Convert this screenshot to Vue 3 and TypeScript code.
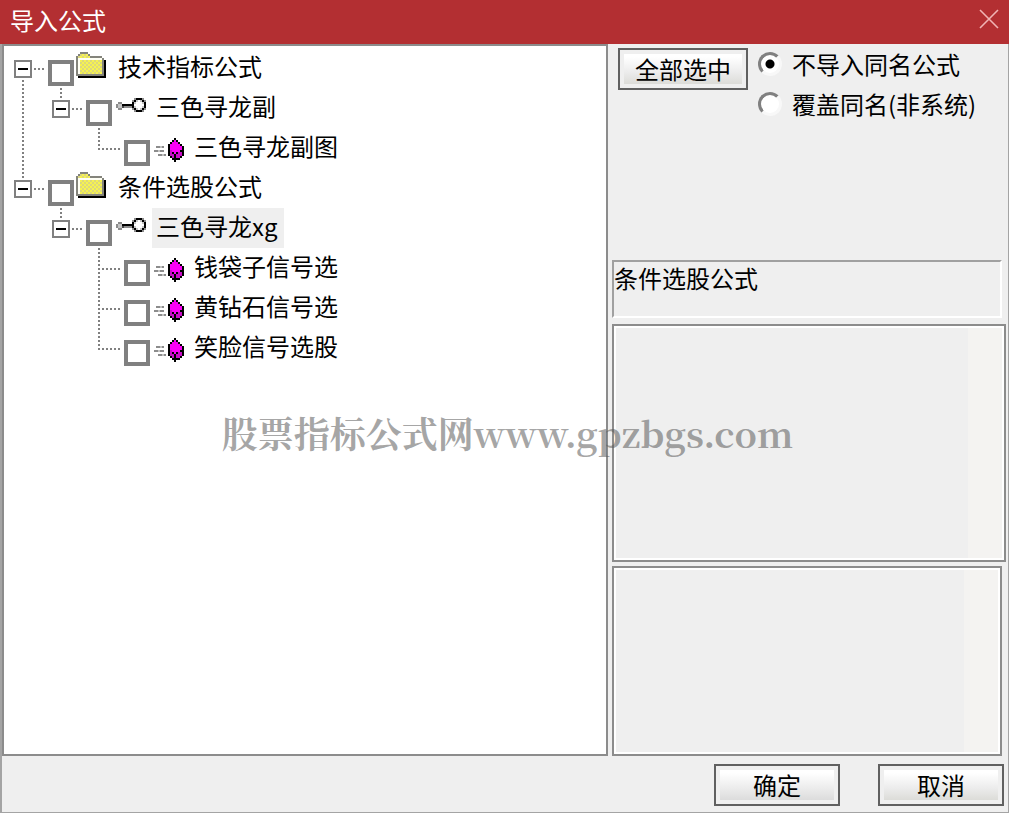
<script setup lang="ts">
import { computed, ref } from 'vue'

type Kind = 'folder' | 'key' | 'gem'

interface TreeNode {
  id: string
  label: string
  kind: Kind
  children?: TreeNode[]
}

interface Row {
  node: TreeNode
  guides: boolean[]
  top: boolean
  bottom: boolean
}

const nodes: TreeNode[] = [
  {
    id: 'tech',
    label: '技术指标公式',
    kind: 'folder',
    children: [
      {
        id: 'tech-sub',
        label: '三色寻龙副',
        kind: 'key',
        children: [{ id: 'tech-chart', label: '三色寻龙副图', kind: 'gem' }],
      },
    ],
  },
  {
    id: 'pick',
    label: '条件选股公式',
    kind: 'folder',
    children: [
      {
        id: 'pick-xg',
        label: '三色寻龙xg',
        kind: 'key',
        children: [
          { id: 'pick-bag', label: '钱袋子信号选', kind: 'gem' },
          { id: 'pick-diamond', label: '黄钻石信号选', kind: 'gem' },
          { id: 'pick-smile', label: '笑脸信号选股', kind: 'gem' },
        ],
      },
    ],
  },
]

const collapsed = ref<string[]>([])
const checked = ref<string[]>([])
const selected = ref('pick-xg')
const mode = ref('skip')

function flatten(list: TreeNode[], guides: boolean[], root: boolean): Row[] {
  return list.flatMap((node, i) => {
    const more = i < list.length - 1
    const row: Row = { node, guides, top: !root || i > 0, bottom: more }
    const open = node.children && !collapsed.value.includes(node.id)
    return open ? [row, ...flatten(node.children!, [...guides, more], false)] : [row]
  })
}

const rows = computed(() => flatten(nodes, [], true))

function toggle(id: string) {
  collapsed.value = collapsed.value.includes(id)
    ? collapsed.value.filter((x) => x !== id)
    : [...collapsed.value, id]
}

function allIds(list: TreeNode[]): string[] {
  return list.flatMap((n) => [n.id, ...allIds(n.children ?? [])])
}

function selectAll() {
  checked.value = allIds(nodes)
}

const palette: Record<string, string> = {
  K: '#000000',
  G: '#84847c',
  W: '#fffff4',
  Y: '#f6f250',
  y: '#dcd87c',
  M: '#fb00f6',
  D: '#c80cc6',
  g: '#8c8c8c',
  l: '#c4c4c4',
  d: '#444444',
}

const bitmaps: Record<Kind, string[]> = {
  folder: [
    '..GGGG.........',
    '.GyYyYG........',
    'GyYyYyYGGGGGG..',
    'GWWWWWWWWWWWWG.',
    'GWYyYyYyYyYyYGK',
    'GWyYyYyYyYyYyGK',
    'GWYyYyYyYyYyYGK',
    'GWyYyYyYyYyYyGK',
    'GWYyYyYyYyYyYGK',
    'GWyYyYyYyYyYyGK',
    'GWYyYyYyYyYyYGK',
    'GGGGGGGGGGGGGGK',
    '.KKKKKKKKKKKKKK',
  ],
  key: [
    '',
    '',
    '',
    '..........gKKKg.',
    '.........gKl.lKg',
    '..gg.....Kl...lK',
    '.gllKKKKKK.....K',
    '.glldggggKl...lK',
    '..gg.....gKl.lKg',
    '..........gKKKg.',
  ],
  gem: [
    '',
    '',
    '',
    '...........K....',
    '..........KMK...',
    '.........KMMMK..',
    '........KMMMMMK.',
    '..gglg..KMMMMMMK',
    '........KMMMMMMK',
    '.gglgg..KDMMMMKK',
    '........KDKMKDDK',
    '...gglg.KDDKDDDK',
    '.........KDKDDK.',
    '..........KKKK..',
    '...........K....',
  ],
}

function cells(kind: Kind) {
  return bitmaps[kind].flatMap((line, y) =>
    [...line].flatMap((c, x) => (c === '.' ? [] : [{ x, y, fill: palette[c] }])),
  )
}
</script>

<template>
  <div class="window">
    <header class="titlebar">
      <h1>导入公式</h1>
      <button type="button" class="close" aria-label="关闭">
        <svg width="20" height="20" viewBox="0 0 20 20">
          <path d="M1 1L19 19M19 1L1 19" stroke="#f0b4b4" stroke-width="1.6" />
        </svg>
      </button>
    </header>

    <main class="frame">
      <div class="body">
        <ul class="tree" role="tree" aria-label="公式">
          <li v-for="row in rows" :key="row.node.id" class="row" role="treeitem">
            <span v-for="(line, i) in row.guides" :key="i" class="guide">
              <svg v-if="line" width="38" height="40" class="rail">
                <path d="M9 0V40" />
              </svg>
            </span>
            <span class="stub">
              <svg width="34" height="40" class="rail">
                <path v-if="row.top" :d="row.node.children ? 'M9 0V12' : 'M9 0V22'" />
                <path v-if="row.bottom" :d="row.node.children ? 'M9 32V40' : 'M9 20V40'" />
                <path :d="row.node.children ? 'M20 21H30' : 'M12 21H30'" />
              </svg>
              <button
                v-if="row.node.children"
                type="button"
                class="toggle"
                :class="{ shut: collapsed.includes(row.node.id) }"
                :aria-label="'展开 ' + row.node.label"
                @click="toggle(row.node.id)"
              ></button>
            </span>
            <input
              :id="row.node.id"
              v-model="checked"
              class="check"
              type="checkbox"
              :value="row.node.id"
              :aria-label="row.node.label"
            />
            <svg class="icon" width="32" height="30" viewBox="0 0 16 15" shape-rendering="crispEdges">
              <rect
                v-for="c in cells(row.node.kind)"
                :key="c.x + '-' + c.y"
                :x="c.x"
                :y="c.y"
                width="1"
                height="1"
                :fill="c.fill"
              />
            </svg>
            <button
              type="button"
              class="label"
              :class="{ selected: selected === row.node.id }"
              @click="selected = row.node.id"
            >{{ row.node.label }}</button>
          </li>
        </ul>

        <section class="side">
          <div class="options">
            <button type="button" class="btn" @click="selectAll">全部选中</button>
            <div class="radios" role="radiogroup" aria-label="同名公式">
              <label><input v-model="mode" type="radio" name="mode" value="skip" />不导入同名公式</label>
              <label><input v-model="mode" type="radio" name="mode" value="cover" />覆盖同名(非系统)</label>
            </div>
          </div>
          <p class="status">条件选股公式</p>
          <textarea class="memo first" readonly aria-label="公式说明"></textarea>
          <textarea class="memo second" readonly aria-label="公式内容"></textarea>
        </section>
      </div>

      <footer class="actions">
        <button type="button" class="btn plain">确定</button>
        <button type="button" class="btn">取消</button>
      </footer>
    </main>

    <div class="watermark">股票指标公式网www.gpzbgs.com</div>
  </div>
</template>

<style>
body {
  margin: 0;
}
</style>

<style scoped>
.window,
.window * {
  box-sizing: border-box;
}

.window {
  position: relative;
  display: flex;
  flex-direction: column;
  min-height: 100vh;
  background: #efefef;
  color: #000;
  font-family: 'Noto Sans CJK SC', 'Liberation Sans', sans-serif;
  font-size: 24px;
  line-height: 40px;
}

button {
  font: inherit;
  color: inherit;
  cursor: default;
}

.titlebar {
  display: flex;
  align-items: flex-start;
  justify-content: space-between;
  height: 44px;
  padding: 0 10px;
  background: #b32f32;
  color: #fff;
}

h1 {
  margin: 0;
  font-size: 24px;
  font-weight: 400;
  line-height: 40px;
}

.close {
  display: flex;
  margin-top: 9px;
  padding: 0;
  border: 0;
  background: none;
}

.frame {
  flex: 1;
  display: flex;
  flex-direction: column;
  border: solid #a4a4a4;
  border-width: 0 1px 1px 2px;
}

.body {
  flex: 1;
  display: grid;
  grid-template-columns: minmax(0, 1fr) 400px;
}

.tree {
  margin: 0;
  padding: 2px 0 0 10px;
  border: 2px solid #8c8c8c;
  background: #fff;
  list-style: none;
}

.row {
  display: flex;
  align-items: flex-start;
  height: 40px;
}

.guide {
  flex: none;
  width: 38px;
  height: 40px;
}

.stub {
  flex: none;
  display: grid;
  width: 34px;
  height: 40px;
}

.stub > * {
  grid-area: 1 / 1;
}

.rail {
  display: block;
  fill: none;
  stroke: #808080;
  stroke-width: 2px;
  stroke-dasharray: 2 2;
}

.toggle {
  width: 18px;
  height: 18px;
  margin-top: 12px;
  padding: 0;
  border: 2px solid #808080;
  background: linear-gradient(#000, #000) center / 10px 2px no-repeat #fff;
}

.toggle.shut {
  background:
    linear-gradient(#000, #000) center / 10px 2px no-repeat,
    linear-gradient(#000, #000) center / 2px 10px no-repeat #fff;
}

.check {
  flex: none;
  appearance: none;
  width: 26px;
  height: 26px;
  margin: 12px 2px 0 0;
  border: 4px solid #808080;
  background: #fff;
}

.check:checked {
  background: linear-gradient(#000, #000) center / 10px 10px no-repeat #fff;
}

.icon {
  flex: none;
  margin: 4px 6px 0 0;
}

.label {
  height: 40px;
  padding: 0 6px 4px 4px;
  border: 0;
  background: none;
  line-height: 36px;
  white-space: nowrap;
}

.label.selected {
  background: #efefef;
}

.side {
  display: flex;
  flex-direction: column;
  padding-left: 4px;
}

.options {
  display: flex;
  align-items: flex-start;
  min-height: 216px;
  padding-left: 6px;
}

.options .btn {
  width: 130px;
  margin: 4px 10px 0 0;
}

.btn {
  width: 126px;
  height: 42px;
  padding: 4px;
  border: 2px solid #606060;
  background: linear-gradient(#fff 10%, #ececec 60%, #dcdcd8) content-box #efefec;
  line-height: 28px;
  white-space: nowrap;
}

.btn.plain {
  background: linear-gradient(#fff 10%, #ececec 60%, #dcdcdc) content-box #f0f0f0;
}

.radios {
  display: flex;
  flex-direction: column;
  white-space: nowrap;
}

.radios label {
  display: flex;
  align-items: center;
  height: 40px;
}

.radios input {
  appearance: none;
  width: 24px;
  height: 24px;
  margin: 0 10px 0 0;
  border: 3px solid;
  border-color: #808080 #f8f8f8 #f8f8f8 #808080;
  border-radius: 50%;
  background: #fff;
}

.radios input:checked {
  background: radial-gradient(circle, #000 4px, #fff 5px);
}

.status {
  height: 58px;
  margin: 0 6px 6px 0;
  border: 2px solid;
  border-color: #a0a0a0 #fff #fff #a0a0a0;
  line-height: 32px;
}

.memo {
  display: block;
  width: auto;
  min-height: 0;
  padding: 2px;
  border: 2px solid #8c8c8c;
  outline: 0;
  background:
    linear-gradient(#f4f3f1, #f4f3f1) right / 34px 100% no-repeat content-box,
    linear-gradient(#efefef, #efefef) content-box,
    #fff;
  font: inherit;
  resize: none;
}

.first {
  flex: 230 1 0;
  margin: 0 2px 4px 0;
}

.second {
  flex: 182 1 0;
  margin: 0 6px 0 0;
}

.actions {
  display: flex;
  justify-content: flex-end;
  gap: 38px;
  padding: 8px 4px 6px;
}

.watermark {
  position: absolute;
  inset: 393px 0 auto;
  padding-left: 6px;
  color: rgba(88, 88, 88, 0.54);
  font-family: 'Noto Serif CJK SC', 'Noto Sans CJK SC', serif;
  font-size: 36px;
  font-weight: 700;
  line-height: 80px;
  text-align: center;
  white-space: nowrap;
  pointer-events: none;
}
</style>
